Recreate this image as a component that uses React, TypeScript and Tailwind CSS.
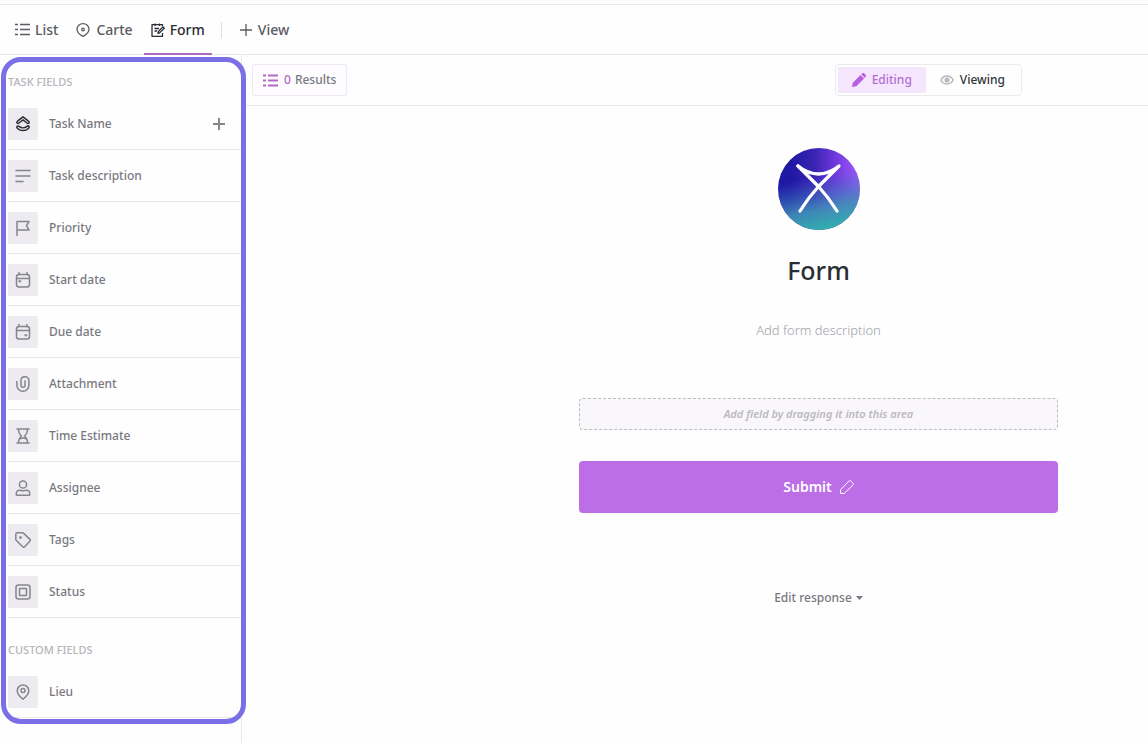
import type { ReactNode } from 'react';

const TASK_FIELDS = [
  { label: 'Task Name', icon: 'task' },
  { label: 'Task description', icon: 'text' },
  { label: 'Priority', icon: 'flag' },
  { label: 'Start date', icon: 'start' },
  { label: 'Due date', icon: 'due' },
  { label: 'Attachment', icon: 'clip' },
  { label: 'Time Estimate', icon: 'hourglass' },
  { label: 'Assignee', icon: 'user' },
  { label: 'Tags', icon: 'tag' },
  { label: 'Status', icon: 'status' },
];

const CUSTOM_FIELDS = [{ label: 'Lieu', icon: 'pin' }];

// 16x16 outlines for the field tiles
const FIELD_ICONS: Record<string, ReactNode> = {
  task: (
    <g stroke="#292d34" strokeWidth="1.500">
      <path d="M8 .8 13.500 5.200c.7.600.8 1.300.4 1.800s-1.200.6-1.900 0L8 3.900 4 7c-.7.600-1.400.500-1.900 0s-.3-1.200.4-1.800Z" />
      <path d="M2.100 10.300c.6-.6 1.300-.5 1.900.1 2.300 1.900 5.700 1.900 8 0 .6-.6 1.300-.7 1.900-.1.500.6.400 1.300-.2 1.900-3.300 3.200-8.100 3.200-11.400 0-.6-.6-.7-1.300-.2-1.900Z" />
    </g>
  ),
  text: <path d="M1 2.500h14M1 8h14M1 13.500h7" />,
  flag: <path d="M2 15.500V1.500h12L11.500 5.700 14 10H2" />,
  start: (
    <>
      <rect x="1.500" y="2.500" width="13" height="12.500" rx="2.500" />
      <path d="M1.500 6.500h13M4 .5v2M12 .5v2" />
      <rect x="4.200" y="8.700" width="1.600" height="1.200" fill="currentColor" strokeWidth=".8" />
    </>
  ),
  due: (
    <>
      <rect x="1.500" y="2.500" width="13" height="12.500" rx="2.500" />
      <path d="M1.500 6.500h13M4 .5v2M12 .5v2" />
      <rect x="10.200" y="10.700" width="1.600" height="1.200" fill="currentColor" strokeWidth=".8" />
    </>
  ),
  clip: (
    <path d="M1.900 5.500V9c0 3.500 2.700 6.200 6 6.200s6-2.700 6-6.200V4.500C13.900 2.300 12.300.8 10 .8S6 2.300 6 4.500v4.700a2 2 0 0 0 4 0V5" />
  ),
  hourglass: (
    <path d="M2 1h12M2 15h12M3.500 1c0 3.500.5 5 3 7-2.500 2-3 3.500-3 7M12.500 1c0 3.500-.5 5-3 7 2.500 2 3 3.500 3 7M4.500 11c2-1.200 5-1.200 7 0" />
  ),
  user: (
    <>
      <circle cx="8" cy="4.500" r="3.600" />
      <path d="M1.200 14.200c0-2.500 1.300-4 3.300-4 1.200 0 2 .6 3.500.6s2.300-.6 3.500-.6c2 0 3.300 1.500 3.300 4 0 .7-.4 1.100-1.100 1.100H2.300c-.7 0-1.100-.4-1.100-1.100Z" />
    </>
  ),
  tag: (
    <>
      <path d="M.8 2.300C.8 1.300 1.400.8 2.300.8h5c.6 0 1 .2 1.400.6l6 5.700c.7.7.7 1.400.1 2.100l-5 5.400c-.7.700-1.400.7-2.100.1L1.400 8.500C1 8.100.8 7.700.8 7.200Z" />
      <rect x="5" y="5" width="1" height="1" fill="currentColor" />
    </>
  ),
  status: (
    <>
      <rect x="1" y="1" width="14" height="14" rx="2.500" />
      <rect x="4.500" y="4.500" width="7" height="7" rx=".5" />
    </>
  ),
  pin: (
    <>
      <path d="M8 15.300C4.500 12.300 2.200 9.800 2.200 6.700a5.800 5.800 0 0 1 11.600 0c0 3.100-2.300 5.600-5.800 8.600Z" />
      <circle cx="8" cy="6.500" r="2" />
    </>
  ),
};

function FieldIcon({ name }: { name: string }) {
  return (
    <svg
      viewBox="0 0 16 16"
      className="h-4 w-4"
      fill="none"
      stroke="currentColor"
      strokeWidth="1.500"
      strokeLinecap="round"
      strokeLinejoin="round"
      aria-hidden="true"
    >
      {FIELD_ICONS[name]}
    </svg>
  );
}

function FieldRow({ label, icon, addable }: { label: string; icon: string; addable?: boolean }) {
  return (
    <li className="flex h-[52px] items-center border-b border-[#e9e9ec] pr-4">
      <span className="flex h-8 w-[30px] items-center justify-center rounded-xs bg-[#edebf0] text-[#85858d]">
        <FieldIcon name={icon} />
      </span>
      <span className="ml-[11px] flex-1 text-xs font-medium text-[#787980]">{label}</span>
      {addable && (
        <button type="button" aria-label={`Add ${label}`} className="text-[#85858b]">
          <svg viewBox="0 0 12 12" className="h-3 w-3" stroke="currentColor" strokeWidth="2" aria-hidden="true">
            <path d="M6 0v12M0 6h12" />
          </svg>
        </button>
      )}
    </li>
  );
}

function ListIcon({ className }: { className: string }) {
  return (
    <svg viewBox="0 0 15 13" className={className} stroke="currentColor" aria-hidden="true">
      <path d="M0 1.500h3M0 6.500h3M0 11.500h3M5 1.500h10M5 6.500h10M5 11.500h10" />
    </svg>
  );
}

function ViewTabs() {
  return (
    <nav className="mt-1 flex h-[51px] items-stretch border-y border-[#e9e9ed] pl-[15px] text-sm font-medium text-[#5a5c63]">
      <a href="#list" className="flex items-center gap-[5px]">
        <ListIcon className="h-[13px] w-[15px] stroke-[1.5]" />
        List
      </a>
      <a href="#carte" className="ml-[18px] flex items-center gap-1.5">
        <svg viewBox="0 0 14 14" className="h-3.5 w-3.5" fill="none" stroke="currentColor" strokeWidth="1.300" aria-hidden="true">
          <path d="M7 13.300C3 11.300 1 9 1 6.200a6 5.500 0 0 1 12 0c0 2.800-2 5.100-6 7.100Z" />
          <circle cx="7" cy="6.500" r="1.300" />
        </svg>
        Carte
      </a>
      <a href="#form" aria-current="page" className="-mb-px ml-[11px] flex items-center gap-[5px] border-b-2 border-[#b06ac4] px-[7px] pt-px text-[#292d34]">
        <svg viewBox="0 0 14 14" className="h-3.5 w-3.5" fill="none" stroke="currentColor" strokeWidth="1.300" strokeLinejoin="round" aria-hidden="true">
          <path d="M11.500 3.500V1.700H1v11.600h10.500V10M4 .5v2.400M8.500 .5v2.400M3.500 5.500h4.500M3.500 8h2.500" />
          <path d="m7 10.500.4-2L12 3.900l1.300 1.300-4.700 4.700Z" />
        </svg>
        Form
      </a>
      <span className="ml-[9px] h-4 w-px self-center bg-[#dfdfe4]" />
      <button type="button" className="ml-[18px] flex items-center gap-1.5">
        <svg viewBox="0 0 12 12" className="h-3 w-3" stroke="currentColor" strokeWidth="1.300" aria-hidden="true">
          <path d="M6 0v12M0 6h12" />
        </svg>
        View
      </button>
    </nav>
  );
}

function Sidebar() {
  return (
    <aside className="w-[242px] shrink-0 border-r border-[#e9e9ed]">
      <div className="relative pl-2">
        <h2 className="flex h-[43px] items-center pt-3 text-[11px] font-medium text-[#b5b5ba]">TASK FIELDS</h2>
        <ul>
          {TASK_FIELDS.map((field, i) => (
            <FieldRow key={field.label} {...field} addable={i === 0} />
          ))}
        </ul>
        <h2 className="flex h-12 items-center pt-4 text-[11px] font-medium text-[#b5b5ba]">CUSTOM FIELDS</h2>
        <ul>
          {CUSTOM_FIELDS.map((field) => (
            <FieldRow key={field.label} {...field} />
          ))}
        </ul>
        {/* Highlight frame */}
        <div className="pointer-events-none absolute top-0.5 -right-[5px] -bottom-1.5 left-px rounded-[20px] border-5 border-[#7b6fe8]" />
      </div>
    </aside>
  );
}

function Toolbar() {
  return (
    <div className="flex h-[51px] items-center justify-between border-b border-[#eaeaee] pr-[126px] pl-2.5 text-xs font-medium">
      <button type="button" className="flex h-8 items-center rounded-xs border border-[#ece9f0] bg-[#fefcff] px-2.5 text-[#787980]">
        <ListIcon className="mr-1.5 h-[13px] w-[15px] stroke-2 text-[#b06ac4]" />
        <span className="mr-1 text-[#b06ac4]">0</span>
        Results
      </button>
      <div className="flex h-8 items-center rounded-sm border border-[#ebebef] p-0.5">
        <button type="button" aria-pressed="true" className="flex h-[26px] items-center gap-1.5 bg-[#f6e6fd] px-3.5 text-[#b16fd6]">
          <svg viewBox="0 0 14 14" className="h-3.5 w-3.5" fill="#b75fe0" aria-hidden="true">
            <path d="m0 14 .8-4.300L8.600 2l3.500 3.500-7.800 7.700Z" />
            <path d="m9.300 1.300.8-.8c.7-.7 1.500-.7 2.200 0l1.200 1.200c.7.7.7 1.500 0 2.200l-.8.800Z" />
          </svg>
          Editing
        </button>
        <button type="button" aria-pressed="false" className="flex h-[26px] items-center gap-1.5 px-3.5 text-[#33353c]">
          <svg viewBox="0 0 14 10" className="h-2.5 w-3.5" fill="none" aria-hidden="true">
            <path d="M.8 5C3.600-.3 10.400-.3 13.200 5 10.400 10.300 3.600 10.300.8 5Z" stroke="#b7b8bd" strokeWidth="1.500" />
            <circle cx="7" cy="5" r="2.500" fill="#b7b8bd" />
          </svg>
          Viewing
        </button>
      </div>
    </div>
  );
}

function Logo() {
  return (
    <svg viewBox="0 0 82 82" className="h-[82px] w-[82px]" role="img" aria-label="Logo">
      <defs>
        <linearGradient id="sky" x1="0" y1="0.350" x2="1" y2="0.350">
          <stop offset="0.150" stopColor="#1f18a4" />
          <stop offset="0.450" stopColor="#3a25b4" />
          <stop offset="0.700" stopColor="#7038dd" />
          <stop offset="0.950" stopColor="#9a55f8" />
        </linearGradient>
        <linearGradient id="sea" x1="0.350" y1="0" x2="0.550" y2="1">
          <stop offset="0.350" stopColor="#3b68c0" stopOpacity="0" />
          <stop offset="0.750" stopColor="#3f90b8" stopOpacity="0.900" />
          <stop offset="1" stopColor="#30b0ad" />
        </linearGradient>
      </defs>
      <circle cx="41" cy="41" r="41" fill="url(#sky)" />
      <circle cx="41" cy="41" r="41" fill="url(#sea)" />
      <g fill="none" stroke="#fff" strokeWidth="3.300" strokeLinecap="round" strokeLinejoin="round">
        <path d="M20 18Q40.500 34 61 18L40.500 38.500Q30 50 22 63" />
        <path d="M20 18 40.500 38.500Q51 50 59 63" />
      </g>
    </svg>
  );
}

function FormEditor() {
  return (
    <section className="pt-[42px] pr-[90px] pl-[337px]">
      <div className="flex flex-col items-center">
        <Logo />
        <h1 className="mt-[22px] text-[25px] leading-9 font-medium text-[#2b2d35]">Form</h1>
        <p className="mt-8 text-[13px] leading-5 font-light text-[#a0a1a6]">Add form description</p>
        <div className="mt-[58px] flex h-8 w-full items-center justify-center rounded-sm border border-dashed border-[#bdbdc2] bg-[#f9f7fa] text-[11px] font-semibold text-[#b9b9be] italic">
          Add field by dragging it into this area
        </div>
        <button type="button" className="mt-[31px] flex h-[52px] w-full items-center justify-center gap-2 rounded-sm bg-[#bb6ee6] text-sm font-semibold text-white">
          Submit
          <svg viewBox="0 0 14 14" className="h-3.5 w-3.5" fill="none" stroke="currentColor" strokeWidth="1" strokeLinejoin="round" aria-hidden="true">
            <path d="M.6 13.400V9.700L9 1c.6-.6 1.200-.6 1.800 0l2.200 2.200c.6.6.6 1.200 0 1.800l-8.700 8.400Z" />
          </svg>
        </button>
        <button type="button" className="mt-[75px] flex items-center gap-1 text-xs leading-5 font-medium text-[#787980]">
          Edit response
          <svg viewBox="0 0 7 4" className="h-1 w-[7px]" fill="currentColor" aria-hidden="true">
            <path d="M0 0h7L3.500 4Z" />
          </svg>
        </button>
      </div>
    </section>
  );
}

export default function App() {
  return (
    <div className="flex min-h-screen flex-col bg-[#fefefe] font-['Noto_Sans','Open_Sans',sans-serif]">
      <ViewTabs />
      <div className="flex flex-1">
        <Sidebar />
        <main className="min-w-0 flex-1">
          <Toolbar />
          <FormEditor />
        </main>
      </div>
    </div>
  );
}
